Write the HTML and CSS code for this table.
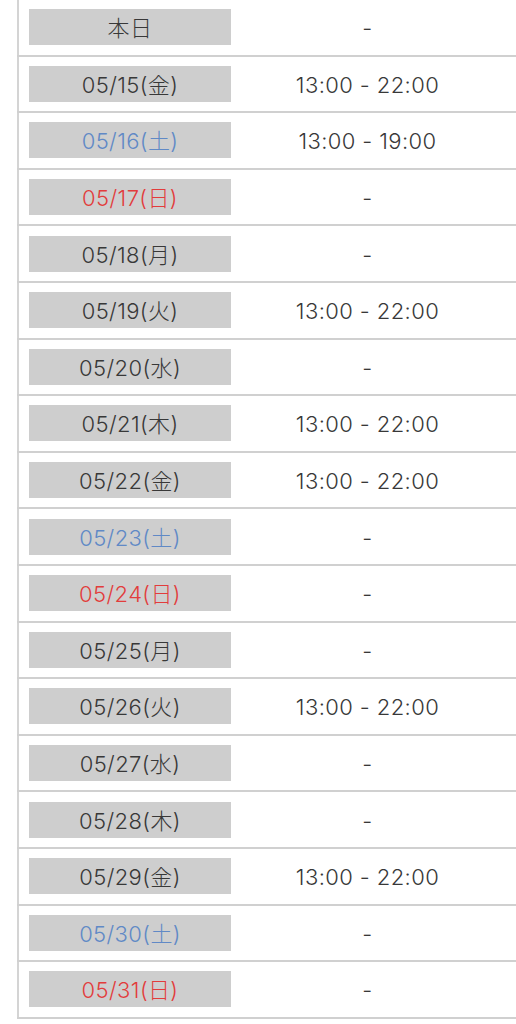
FILE: index.html
```html
<!DOCTYPE html>
<html lang="ja">
<head>
  <meta charset="UTF-8" />
  <title>営業時間</title>
  <link rel="stylesheet" href="styles.css">
</head>
<body>

  <table class="schedule">
    <tr><td class="day"><span class="label">本日</span></td><td class="time">-</td></tr>
    <tr><td class="day"><span class="label">05/15(金)</span></td><td class="time">13:00 - 22:00</td></tr>
    <tr><td class="day"><span class="label sat">05/16(土)</span></td><td class="time">13:00 - 19:00</td></tr>
    <tr><td class="day"><span class="label sun">05/17(日)</span></td><td class="time">-</td></tr>
    <tr><td class="day"><span class="label">05/18(月)</span></td><td class="time">-</td></tr>
    <tr><td class="day"><span class="label">05/19(火)</span></td><td class="time">13:00 - 22:00</td></tr>
    <tr><td class="day"><span class="label">05/20(水)</span></td><td class="time">-</td></tr>
    <tr><td class="day"><span class="label">05/21(木)</span></td><td class="time">13:00 - 22:00</td></tr>
    <tr><td class="day"><span class="label">05/22(金)</span></td><td class="time">13:00 - 22:00</td></tr>
    <tr><td class="day"><span class="label sat">05/23(土)</span></td><td class="time">-</td></tr>
    <tr><td class="day"><span class="label sun">05/24(日)</span></td><td class="time">-</td></tr>
    <tr><td class="day"><span class="label">05/25(月)</span></td><td class="time">-</td></tr>
    <tr><td class="day"><span class="label">05/26(火)</span></td><td class="time">13:00 - 22:00</td></tr>
    <tr><td class="day"><span class="label">05/27(水)</span></td><td class="time">-</td></tr>
    <tr><td class="day"><span class="label">05/28(木)</span></td><td class="time">-</td></tr>
    <tr><td class="day"><span class="label">05/29(金)</span></td><td class="time">13:00 - 22:00</td></tr>
    <tr><td class="day"><span class="label sat">05/30(土)</span></td><td class="time">-</td></tr>
    <tr><td class="day"><span class="label sun">05/31(日)</span></td><td class="time">-</td></tr>
  </table>

</body>
</html>
```

FILE: styles.css
```css
html {
  overflow: hidden;
}

body {
  margin: 0;
  background: #fff;
  font-family: 'Inter', 'Noto Sans CJK JP', sans-serif;
  font-weight: 300;
  color: #383838;
}

.schedule {
  margin-left: 17px;
  width: 499px;
  border-collapse: collapse;
  border-left: 2px solid #d4d4d4;
}

.schedule td {
  border-bottom: 2px solid #d0d0d0;
  padding: 9.3px 0;
  font-size: 22px;
  letter-spacing: 0.4px;
  line-height: 36px;
  height: 36px;
}

.day {
  width: 212px;
  padding-left: 10px !important;
}

.label {
  display: block;
  width: 202px;
  height: 34px;
  padding-top: 2px;
  line-height: 34px;
  background: #cecece;
  text-align: center;
}

.sat {
  color: #6089c6;
}

.sun {
  color: #e23c3c;
}

.time {
  text-align: center;
  padding: 10.3px 22px 8.3px 0 !important;
}
```
